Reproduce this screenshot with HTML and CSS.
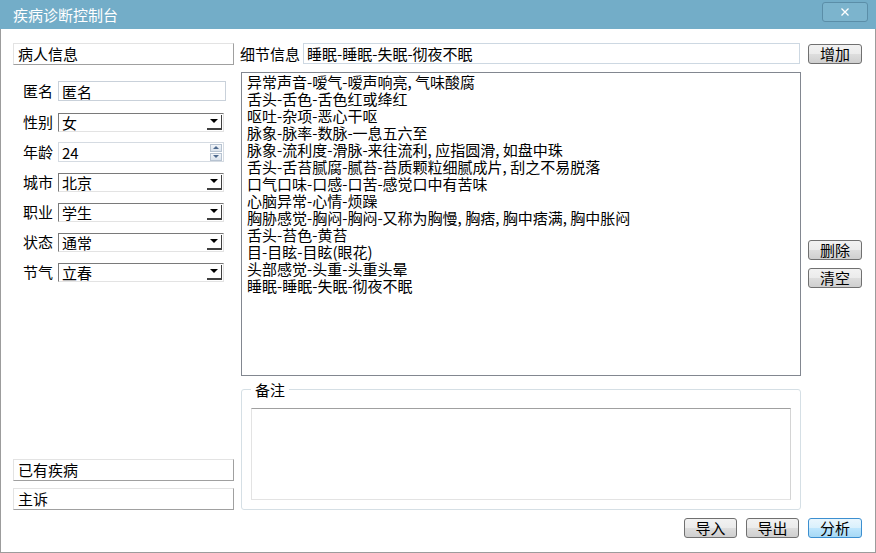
FILE: index.html
```html
<!DOCTYPE html>
<html lang="zh-CN">
<head>
    <meta charset="UTF-8">
    <meta name="viewport" content="width=device-width, initial-scale=1.0">
    <title>疾病诊断控制台</title>
    <link rel="stylesheet" href="styles.css">
</head>
<body>

<div class="window">
    <div class="titlebar">
        <span class="title">疾病诊断控制台</span>
        <div class="close-btn">
            <svg width="8" height="8" viewBox="0 0 8 8">
                <path d="M0.5 0.5 L7.5 7.5 M7.5 0.5 L0.5 7.5" stroke="#fff" stroke-width="1.3" fill="none"/>
            </svg>
        </div>
    </div>

    <div class="client">
        <div class="main">
            <!-- patient info -->
            <div class="left">
                <div class="panel-head">病人信息</div>
                <div class="form">
                    <div class="row first">
                        <label>匿名</label>
                        <div class="edit name-edit">匿名</div>
                    </div>
                    <div class="row">
                        <label>性别</label>
                        <div class="combo"><span>女</span><i class="drop"></i></div>
                    </div>
                    <div class="row">
                        <label>年龄</label>
                        <div class="edit spin-edit">
                            <span>24</span>
                            <div class="spin">
                                <i class="spin-up"></i>
                                <i class="spin-down"></i>
                            </div>
                        </div>
                    </div>
                    <div class="row">
                        <label>城市</label>
                        <div class="combo"><span>北京</span><i class="drop"></i></div>
                    </div>
                    <div class="row">
                        <label>职业</label>
                        <div class="combo"><span>学生</span><i class="drop"></i></div>
                    </div>
                    <div class="row">
                        <label>状态</label>
                        <div class="combo"><span>通常</span><i class="drop"></i></div>
                    </div>
                    <div class="row">
                        <label>节气</label>
                        <div class="combo"><span>立春</span><i class="drop"></i></div>
                    </div>
                </div>
                <div class="left-bottom">
                    <div class="panel-head">已有疾病</div>
                    <div class="panel-head">主诉</div>
                </div>
            </div>

            <!-- symptom details -->
            <div class="center">
                <div class="detail-row">
                    <span class="detail-label">细节信息</span>
                    <div class="edit detail-edit">睡眠-睡眠-失眠-彻夜不眠</div>
                </div>
                <ul class="listbox">
                    <li>异常声音-嗳气-嗳声响亮, 气味酸腐</li>
                    <li>舌头-舌色-舌色红或绛红</li>
                    <li>呕吐-杂项-恶心干呕</li>
                    <li>脉象-脉率-数脉-一息五六至</li>
                    <li>脉象-流利度-滑脉-来往流利, 应指圆滑, 如盘中珠</li>
                    <li>舌头-舌苔腻腐-腻苔-苔质颗粒细腻成片, 刮之不易脱落</li>
                    <li>口气口味-口感-口苦-感觉口中有苦味</li>
                    <li>心脑异常-心情-烦躁</li>
                    <li>胸胁感觉-胸闷-胸闷-又称为胸慢, 胸痞, 胸中痞满, 胸中胀闷</li>
                    <li>舌头-苔色-黄苔</li>
                    <li>目-目眩-目眩(眼花)</li>
                    <li>头部感觉-头重-头重头晕</li>
                    <li>睡眠-睡眠-失眠-彻夜不眠</li>
                </ul>
                <fieldset class="group">
                    <legend>备注</legend>
                    <div class="memo"></div>
                </fieldset>
            </div>

            <div class="right">
                <button type="button" class="btn add-btn">增加</button>
                <button type="button" class="btn del-btn">删除</button>
                <button type="button" class="btn">清空</button>
            </div>
        </div>

        <div class="toolbar">
            <button type="button" class="btn">导入</button>
            <button type="button" class="btn">导出</button>
            <button type="button" class="btn default-btn">分析</button>
        </div>
    </div>
</div>

</body>
</html>
```

FILE: styles.css
```css
body {
    margin: 0;
    font-family: "Noto Sans CJK SC", "Noto Sans", sans-serif;
    font-size: 15px;
    color: #000;
    background: #fff;
}

.window {
    width: 876px;
    height: 553px;
    display: flex;
    flex-direction: column;
    box-sizing: border-box;
}

/* title bar */
.titlebar {
    height: 29px;
    flex: none;
    display: flex;
    align-items: flex-start;
    background-color: #73adc8;
}

.title {
    color: #fff;
    line-height: 29px;
    padding-left: 13px;
}

.close-btn {
    margin-left: auto;
    margin-right: 8px;
    margin-top: 2px;
    width: 46px;
    height: 20px;
    box-sizing: border-box;
    border: 1px solid #5b8ea8;
    border-radius: 3px;
    background-color: #7cb4cd;
    display: flex;
    align-items: center;
    justify-content: center;
}

/* client area */
.client {
    flex: 1;
    display: flex;
    flex-direction: column;
    border: 1px solid #9c9c9c;
    border-top: none;
    padding: 14px 13px 0 12px;
}

.main {
    height: 467px;
    display: flex;
    gap: 7px;
}

.left {
    width: 221px;
    display: flex;
    flex-direction: column;
}

.panel-head {
    height: 22px;
    box-sizing: border-box;
    border: 1px solid #a0a0a0;
    border-top-color: #e3e3e3;
    border-left-color: #e3e3e3;
    padding-left: 4px;
    line-height: 20px;
}

.form {
    margin-top: 16px;
    display: flex;
    flex-direction: column;
    gap: 10px;
}

.row {
    height: 20px;
    display: flex;
    align-items: center;
}

.row.first {
    margin-bottom: 1px;
}

.row label {
    width: 35px;
    padding-left: 10px;
    flex: none;
    line-height: 20px;
}

.edit {
    box-sizing: border-box;
    border: 1px solid #c9d1da;
    padding-left: 3px;
    line-height: 19px;
    background: #fff;
}

.name-edit {
    width: 168px;
    height: 20px;
}

.spin-edit {
    width: 166px;
    height: 20px;
    display: flex;
    align-items: center;
    border-color: #d5dbe2;
}

.spin {
    margin-left: auto;
    margin-right: 1px;
    width: 12px;
    display: flex;
    flex-direction: column;
    gap: 1px;
}

.spin i {
    height: 8px;
    box-sizing: border-box;
    border: 1px solid #b7c3d1;
    background: linear-gradient(#f2f5f9, #dbe3ec);
    display: flex;
    align-items: center;
    justify-content: center;
}

.spin-up::before {
    content: "";
    border-left: 3px solid transparent;
    border-right: 3px solid transparent;
    border-bottom: 3px solid #4e6a8e;
}

.spin-down::before {
    content: "";
    border-left: 3px solid transparent;
    border-right: 3px solid transparent;
    border-top: 3px solid #4e6a8e;
}

.combo {
    width: 166px;
    height: 19px;
    box-sizing: border-box;
    display: flex;
    align-items: center;
    border: 1px solid #e3e3e3;
    border-top-color: #7a7a7a;
    border-left-color: #7a7a7a;
    padding-left: 3px;
    line-height: 17px;
}

.drop {
    margin-left: auto;
    margin-right: 1px;
    width: 15px;
    height: 15px;
    box-sizing: border-box;
    border-right: 1px solid #404040;
    border-bottom: 2px solid #404040;
    display: flex;
    align-items: center;
    justify-content: center;
}

.drop::before {
    content: "";
    border-left: 4px solid transparent;
    border-right: 4px solid transparent;
    border-top: 4px solid #000;
}

.left-bottom {
    margin-top: auto;
    display: flex;
    flex-direction: column;
    gap: 7px;
}

/* center column */
.center {
    width: 560px;
    display: flex;
    flex-direction: column;
}

.detail-row {
    height: 21px;
    display: flex;
    align-items: center;
}

.detail-label {
    margin-left: -1px;
    width: 63px;
    line-height: 21px;
}

.detail-edit {
    width: 497px;
    height: 21px;
    line-height: 19px;
    border-color: #cdd8e2;
}

.listbox {
    list-style: none;
    margin: 8px 0 0 0;
    padding: 0 0 0 5px;
    height: 304px;
    box-sizing: border-box;
    border: 1px solid #828790;
    line-height: 17px;
    white-space: nowrap;
    overflow: hidden;
}

.group {
    margin: 5px 0 0 0;
    height: 129px;
    box-sizing: border-box;
    border: 1px solid #d5dfe5;
    border-radius: 3px;
    padding: 10px 9px 8px 9px;
}

.group legend {
    padding: 0 4px;
    line-height: 17px;
}

.memo {
    height: 92px;
    box-sizing: border-box;
    border: 1px solid #d4d4d4;
    border-top-color: #a0a0a0;
    border-left-color: #e3e3e3;
    border-bottom-color: #e3e3e3;
}

/* buttons */
.right {
    width: 54px;
    display: flex;
    flex-direction: column;
}

.btn {
    width: 54px;
    height: 20px;
    padding: 0;
    box-sizing: border-box;
    border: 1px solid #707070;
    border-radius: 3px;
    background: linear-gradient(#f2f2f2 0%, #ebebeb 50%, #dddddd 51%, #cfcfcf 100%);
    font-family: inherit;
    font-size: 15px;
    line-height: 18px;
    color: #000;
}

.add-btn {
    margin-top: 1px;
}

.del-btn {
    margin-top: 176px;
    margin-bottom: 8px;
}

.toolbar {
    margin-top: 8px;
    display: flex;
    justify-content: flex-end;
    gap: 9px;
}

.toolbar .btn {
    width: 53px;
}

.toolbar .default-btn {
    width: 54px;
    border-color: #3c8fd0;
    background: linear-gradient(#eaf6fd 0%, #d9f0fc 50%, #bee6fd 51%, #a7d9f5 100%);
}
```
